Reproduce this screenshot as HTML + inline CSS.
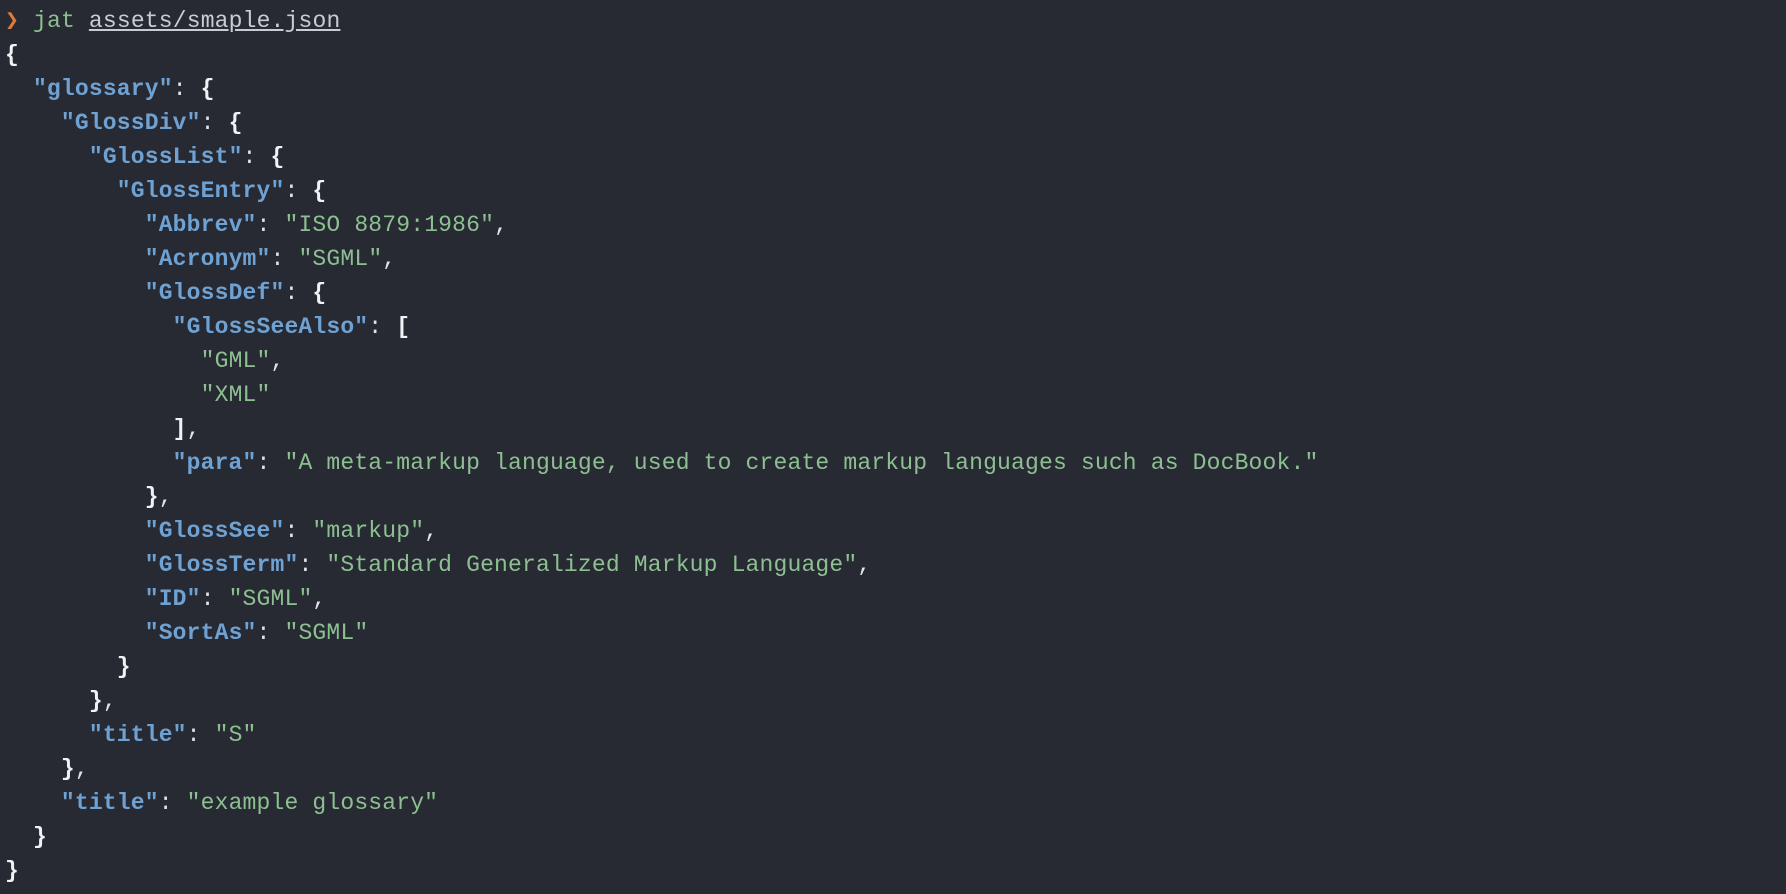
<!DOCTYPE html>
<html><head><style>
html,body{margin:0;padding:0;background:#272a33;width:1786px;height:894px;overflow:hidden}
pre{margin:0;position:absolute;left:5px;top:4px;font-family:"Liberation Mono",monospace;font-size:23px;letter-spacing:0.17px;line-height:34px;color:#dfe3ea}
.k{color:#6fa2d3;font-weight:bold}
.s{color:#8dc091}
.p{color:#e07a3a}
.j{color:#8dc091}
.u{text-decoration:underline;color:#c8ccd4}
b{font-weight:bold;color:#f0f2f5}
</style></head><body>
<pre><span class="p">❯</span> <span class="j">jat</span> <span class="u">assets/smaple.json</span>
<b>{</b>
  <span class="k">"glossary"</span>: <b>{</b>
    <span class="k">"GlossDiv"</span>: <b>{</b>
      <span class="k">"GlossList"</span>: <b>{</b>
        <span class="k">"GlossEntry"</span>: <b>{</b>
          <span class="k">"Abbrev"</span>: <span class="s">"ISO 8879:1986"</span>,
          <span class="k">"Acronym"</span>: <span class="s">"SGML"</span>,
          <span class="k">"GlossDef"</span>: <b>{</b>
            <span class="k">"GlossSeeAlso"</span>: <b>[</b>
              <span class="s">"GML"</span>,
              <span class="s">"XML"</span>
            <b>]</b>,
            <span class="k">"para"</span>: <span class="s">"A meta-markup language, used to create markup languages such as DocBook."</span>
          <b>}</b>,
          <span class="k">"GlossSee"</span>: <span class="s">"markup"</span>,
          <span class="k">"GlossTerm"</span>: <span class="s">"Standard Generalized Markup Language"</span>,
          <span class="k">"ID"</span>: <span class="s">"SGML"</span>,
          <span class="k">"SortAs"</span>: <span class="s">"SGML"</span>
        <b>}</b>
      <b>}</b>,
      <span class="k">"title"</span>: <span class="s">"S"</span>
    <b>}</b>,
    <span class="k">"title"</span>: <span class="s">"example glossary"</span>
  <b>}</b>
<b>}</b></pre>
</body></html>
